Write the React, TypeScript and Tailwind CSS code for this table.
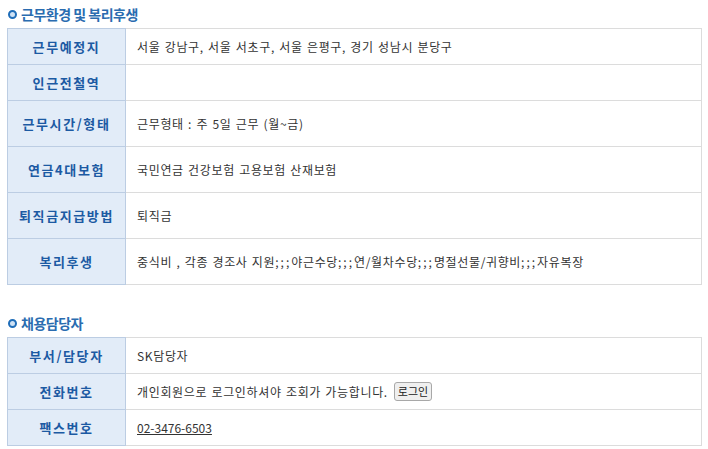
import React from "react";

type Row = { label: string; value: React.ReactNode; h: string };

const font = { fontFamily: '"Noto Sans CJK KR", "Noto Sans", sans-serif' };

// semicolons in the original (Gulim) are much wider than in Noto
const Txt = ({ s }: { s: string }) => (
  <>
    {s.split(/(;+)/).map((part, i) =>
      part.startsWith(";") ? (
        <span key={i} className="tracking-[2px]">
          {part}
        </span>
      ) : (
        <React.Fragment key={i}>{part}</React.Fragment>
      )
    )}
  </>
);

const SectionTitle = ({ title }: { title: string }) => (
  <div className="flex items-center gap-[4px] pl-[8px] h-[28px]">
    <span className="w-[9px] h-[9px] rounded-full border-[2px] border-[#1f6db8] bg-[#cfe2f5]" />
    <span className="text-[14px] font-bold text-[#2a6cb0] leading-none tracking-[-0.5px]">
      {title}
    </span>
  </div>
);

const InfoTable = ({ rows }: { rows: Row[] }) => (
  <table className="ml-[7px] w-[695px] border-collapse table-fixed">
    <colgroup>
      <col className="w-[118px]" />
      <col />
    </colgroup>
    <tbody>
      {rows.map((r) => (
        <tr key={r.label} className={r.h}>
          <th className="bg-[#e2ecf8] border border-[#bccde3] text-[13px] font-bold text-[#1c5aa3] text-center tracking-[1.6px]">
            {r.label}
          </th>
          <td className="border border-[#dcdcdc] pl-[11px] text-[12px] text-[#333] tracking-[0.65px] [word-spacing:1px]">
            {r.value}
          </td>
        </tr>
      ))}
    </tbody>
  </table>
);

export default function App() {
  const work: Row[] = [
    { label: "근무예정지", value: "서울 강남구, 서울 서초구, 서울 은평구, 경기 성남시 분당구", h: "h-[36px]" },
    { label: "인근전철역", value: "", h: "h-[36px]" },
    { label: "근무시간/형태", value: "근무형태 : 주 5일 근무 (월~금)", h: "h-[46px]" },
    { label: "연금4대보험", value: "국민연금 건강보험 고용보험 산재보험", h: "h-[46px]" },
    { label: "퇴직금지급방법", value: "퇴직금", h: "h-[46px]" },
    {
      label: "복리후생",
      value: <Txt s="중식비 , 각종 경조사 지원;;;야근수당;;;연/월차수당;;;명절선물/귀향비;;;자유복장" />,
      h: "h-[46px]",
    },
  ];

  const contact: Row[] = [
    { label: "부서/담당자", value: "SK담당자", h: "h-[36px]" },
    {
      label: "전화번호",
      value: (
        <span className="flex items-center gap-[6px]">
          개인회원으로 로그인하셔야 조회가 가능합니다.
          <button className="h-[19px] px-[3px] text-[11px] leading-none tracking-normal border border-[#a8a8a8] rounded-[3px] bg-[#efefef] text-[#222]">
            로그인
          </button>
        </span>
      ),
      h: "h-[36px]",
    },
    {
      label: "팩스번호",
      value: <span className="underline tracking-normal">02-3476-6503</span>,
      h: "h-[36px]",
    },
  ];

  return (
    <div className="w-[708px] h-[449px] bg-white overflow-hidden" style={font}>
      <SectionTitle title="근무환경 및 복리후생" />
      <InfoTable rows={work} />
      <div className="h-[24px]" />
      <SectionTitle title="채용담당자" />
      <InfoTable rows={contact} />
    </div>
  );
}
